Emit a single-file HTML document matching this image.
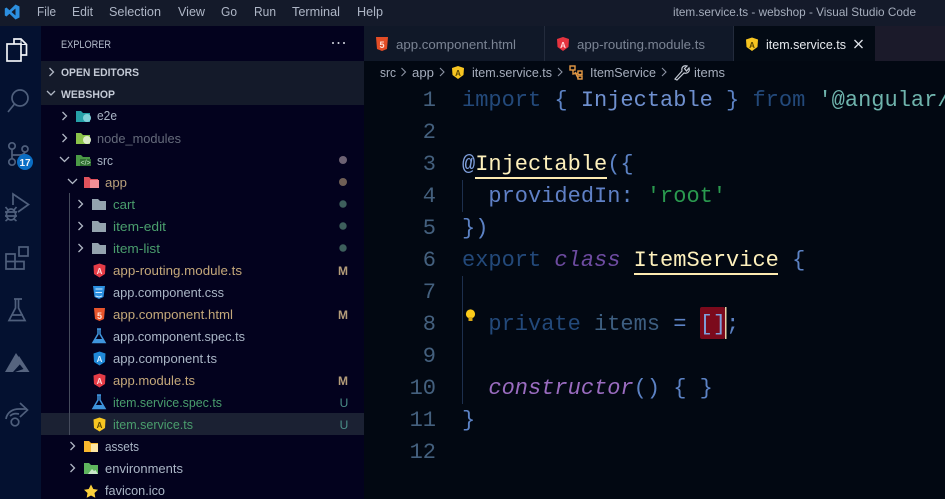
<!DOCTYPE html>
<html><head><meta charset="utf-8"><style>
html,body{margin:0;padding:0;background:#020812;width:945px;height:499px;overflow:hidden}
svg{display:block}
text{font-family:"Liberation Sans",sans-serif;font-size:13px;white-space:pre}
.m{fill:#aeb6c6;font-size:13px}
.t{font-size:13px}
.c text,text.c{font-family:"Liberation Mono",monospace;font-size:22px}
.ln{font-family:"Liberation Mono",monospace;font-size:22px;fill:#44607e;text-anchor:end}
.a{fill:none;stroke:#4f5f7c;stroke-width:1.7}
.ch{fill:none;stroke:#b0b7c4;stroke-width:1.3}
</style></head><body>
<svg width="945" height="499" viewBox="0 0 945 499" xmlns="http://www.w3.org/2000/svg">
<!-- backgrounds -->
<rect width="945" height="499" fill="#020812"/>
<rect width="945" height="26" fill="#141a2a"/>
<rect x="0" y="26" width="41" height="473" fill="#041130"/>
<rect x="41" y="26" width="323" height="473" fill="#03021e"/>
<rect x="41" y="61" width="323" height="44" fill="#141a2a"/>
<rect x="41" y="413" width="323" height="22" fill="#1b2133"/>
<rect x="364" y="26" width="581" height="35" fill="#101828"/>
<rect x="733" y="26" width="142" height="35" fill="#030a14"/>
<rect x="875" y="26" width="70" height="35" fill="#1b1a2a"/>
<rect x="544" y="26" width="1" height="35" fill="#232b3c"/>
<rect x="733" y="26" width="1" height="35" fill="#232b3c"/>

<!-- title bar -->
<path d="M15.5 4.500 19.500 6.500V17.500L15.500 19.500 9.500 13.800 6.500 16.500 4.800 15.500V8.500L6.500 7.500 9.500 10.200ZM15.500 8.500 11.500 12 15.500 15.500Z" fill="#2c8fe0"/>
<text class="m" x="37" y="16" textLength="19" lengthAdjust="spacingAndGlyphs">File</text>
<text class="m" x="72" y="16" textLength="21" lengthAdjust="spacingAndGlyphs">Edit</text>
<text class="m" x="109" y="16" textLength="52" lengthAdjust="spacingAndGlyphs">Selection</text>
<text class="m" x="178" y="16" textLength="27" lengthAdjust="spacingAndGlyphs">View</text>
<text class="m" x="221" y="16" textLength="16" lengthAdjust="spacingAndGlyphs">Go</text>
<text class="m" x="254" y="16" textLength="22" lengthAdjust="spacingAndGlyphs">Run</text>
<text class="m" x="292" y="16" textLength="48" lengthAdjust="spacingAndGlyphs">Terminal</text>
<text class="m" x="357" y="16" textLength="26" lengthAdjust="spacingAndGlyphs">Help</text>
<text x="673" y="16" style="font-size:12px" fill="#a6aebd" textLength="243" lengthAdjust="spacingAndGlyphs">item.service.ts - webshop - Visual Studio Code</text>

<!-- activity bar -->
<g fill="none" stroke="#f0f2f6" stroke-width="1.700">
<path d="M14 44V39H21L26.500 44.500V55H21"/>
<rect x="7" y="44" width="14" height="17"/>
<path d="M21 39V44.500H26.500" stroke-width="1"/>
</g>
<g class="a">
<circle cx="20" cy="98" r="8"/><path d="M14.500 104 8 112"/>
<circle cx="12" cy="146" r="3.200"/><circle cx="12" cy="162" r="3.200"/><circle cx="25" cy="149" r="3"/>
<path d="M12 149.500V158.500M12 155H20C23 155 25 153 25 152"/>
<path d="M13 205V194L28.500 204.500 18 212"/>
<path d="M5 212H17M8 210 5.500 207M14 210 16.500 207M8 219 5.500 221M14 219 16.500 221M5 216H17"/>
<ellipse cx="11" cy="214.500" rx="4.500" ry="5.500"/>
<path d="M6 254H15V269H6ZM6 261.500H24V269H15M15 254V261.500"/>
<rect x="19" y="247" width="9" height="9"/>
<path d="M14 299H22M15.500 299V308L9 320.500H25L18.500 308V299M11.500 315H23"/>
<path d="M6 419C7 412 13 409 19 409H27"/>
<path d="M20 403 27.500 410 20 417"/>
<path d="M10 416C12 414 15 413 19 414"/>
<circle cx="15" cy="422" r="3.800"/>
</g>
<path d="M16 353 5 372H13L22 362Z" fill="#56647f"/>
<path d="M19 356 29.500 372H15L23.500 369 17 361Z" fill="#56647f"/>
<circle cx="25" cy="162" r="8" fill="#0a6ec4"/>
<text x="25" y="166" text-anchor="middle" style="font-size:10px;font-weight:bold" fill="#f2f5fa">17</text>

<!-- explorer headers -->
<text x="61" y="48" style="font-size:11px" fill="#b4bccb" textLength="50" lengthAdjust="spacingAndGlyphs">EXPLORER</text>
<g fill="#d8dce4"><circle cx="333" cy="43" r="1"/><circle cx="338.500" cy="43" r="1"/><circle cx="344" cy="43" r="1"/></g>
<path class="ch" d="M49.500 68 53.500 72 49.500 76M47 91 51 95 55 91"/>
<text x="61" y="76" style="font-size:11px;font-weight:bold" fill="#c4cad6" textLength="78" lengthAdjust="spacingAndGlyphs">OPEN EDITORS</text>
<text x="61" y="98" style="font-size:11px;font-weight:bold" fill="#c4cad6" textLength="54" lengthAdjust="spacingAndGlyphs">WEBSHOP</text>

<!-- tree guide -->
<rect x="69" y="193" width="1" height="242" fill="#454b5c"/>
<!-- chevrons -->
<path class="ch" d="M62.500 112 66.500 116 62.500 120M62.500 134 66.500 138 62.500 142M60 157 64.500 161.500 69 157M68 179 72.500 183.500 77 179M78.500 200 82.500 204 78.500 208M78.500 222 82.500 226 78.500 230M78.500 244 82.500 248 78.500 252M70.500 442 74.500 446 70.500 450M70.500 464 74.500 468 70.500 472"/>

<!-- folder icons -->
<g>
<path d="M76 111H81L83 113H90V122H76Z" fill="#26a0a8"/><circle cx="87" cy="118" r="4" fill="#7fd0d8"/>
<path d="M76 133H81L83 135H90V144H76Z" fill="#8bc34a"/><circle cx="87" cy="140" r="4" fill="#dcedc8"/>
<path d="M76 155H81L83 157H90V166H76Z" fill="#4b9a46"/><rect x="80" y="159" width="11" height="7" fill="#2f6e31"/><text x="80.500" y="165" style="font-size:7px" fill="#c8e6c9">&lt;/&gt;</text>
<path d="M84 177H89L91 179H98V188H84Z" fill="#e0525c"/><rect x="90" y="180" width="9" height="8" fill="#f18f96"/>
<path d="M92 199H98L100 201H106V210H92Z" fill="#94a3ae"/>
<path d="M92 221H98L100 223H106V232H92Z" fill="#94a3ae"/>
<path d="M92 243H98L100 245H106V254H92Z" fill="#94a3ae"/>
<path d="M84 441H89L91 443H98V452H84Z" fill="#f9b82e"/><rect x="91" y="444" width="7" height="8" fill="#fde6a4"/>
<path d="M84 463H89L91 465H98V474H84Z" fill="#5fb65f"/><path d="M88 474 92 469 94 471 95.500 470 98 474Z" fill="#c9e7c9"/>
<path d="M91 484.500 93.300 489 98 489.700 94.500 493 95.300 497.800 91 495.500 86.700 497.800 87.500 493 84 489.700 88.700 489Z" fill="#fbd03c"/>
</g>

<!-- file icons -->
<g>
<path d="M99.500 263.500 105.500 265.500 105 274 99.500 277.500 94 274 93.500 265.500Z" fill="#e53b46"/><text x="99.500" y="274" text-anchor="middle" style="font-size:8px;font-weight:bold" fill="#ffd9dc">A</text>
<path d="M93 286H105L103.500 297 99 299 94.500 297Z" fill="#2b8fe0"/><path d="M95.500 289H102.500M95.500 292.500H102M95.500 296 99 297 102 296" stroke="#cfe8ff" fill="none" stroke-width="1"/>
<path d="M94 308H105L104 319 99.500 321 95 319Z" fill="#e8552c" /><text x="99.500" y="319" text-anchor="middle" style="font-size:9px;font-weight:bold" fill="#ffe0d6">5</text>
<path d="M98 329V334L93 342.500H105L100 334V329ZM97 329H101" fill="none" stroke="#3f95dd" stroke-width="1.500"/><path d="M95.500 339H102.500L104 342H94Z" fill="#3f95dd"/>
<path d="M99.500 351.500 105.500 353.500 105 362 99.500 365.500 94 362 93.500 353.500Z" fill="#1f88d8"/><text x="99.500" y="362" text-anchor="middle" style="font-size:8px;font-weight:bold" fill="#d8eeff">A</text>
<path d="M99.500 373.500 105.500 375.500 105 384 99.500 387.500 94 384 93.500 375.500Z" fill="#e53b46"/><text x="99.500" y="384" text-anchor="middle" style="font-size:8px;font-weight:bold" fill="#ffd9dc">A</text>
<path d="M98 395V400L93 408.500H105L100 400V395ZM97 395H101" fill="none" stroke="#3f95dd" stroke-width="1.500"/><path d="M95.500 405H102.500L104 408H94Z" fill="#3f95dd"/>
<path d="M99.500 417.500 105.500 419.500 105 428 99.500 431.500 94 428 93.500 419.500Z" fill="#f7c521"/><text x="99.500" y="428" text-anchor="middle" style="font-size:8px;font-weight:bold" fill="#5a4600">A</text>
</g>

<!-- tree text -->
<text class="t" x="97" y="120" fill="#aab6c6" textLength="20" lengthAdjust="spacingAndGlyphs">e2e</text>
<text class="t" x="97" y="143" fill="#656b7b" textLength="84" lengthAdjust="spacingAndGlyphs">node_modules</text>
<text class="t" x="97" y="165" fill="#aab6c6" textLength="16" lengthAdjust="spacingAndGlyphs">src</text>
<text class="t" x="105" y="187" fill="#b9a17c" textLength="22" lengthAdjust="spacingAndGlyphs">app</text>
<text class="t" x="113" y="209" fill="#4a9e6d" textLength="22" lengthAdjust="spacingAndGlyphs">cart</text>
<text class="t" x="113" y="231" fill="#4a9e6d" textLength="53" lengthAdjust="spacingAndGlyphs">item-edit</text>
<text class="t" x="113" y="253" fill="#4a9e6d" textLength="47" lengthAdjust="spacingAndGlyphs">item-list</text>
<text class="t" x="113" y="275" fill="#c4a87a" textLength="129" lengthAdjust="spacingAndGlyphs">app-routing.module.ts</text>
<text class="t" x="113" y="297" fill="#aab6c6" textLength="111" lengthAdjust="spacingAndGlyphs">app.component.css</text>
<text class="t" x="113" y="319" fill="#c4a87a" textLength="120" lengthAdjust="spacingAndGlyphs">app.component.html</text>
<text class="t" x="113" y="341" fill="#aab6c6" textLength="132" lengthAdjust="spacingAndGlyphs">app.component.spec.ts</text>
<text class="t" x="113" y="363" fill="#aab6c6" textLength="104" lengthAdjust="spacingAndGlyphs">app.component.ts</text>
<text class="t" x="113" y="385" fill="#c4a87a" textLength="82" lengthAdjust="spacingAndGlyphs">app.module.ts</text>
<text class="t" x="113" y="407" fill="#4a9e6d" textLength="109" lengthAdjust="spacingAndGlyphs">item.service.spec.ts</text>
<text class="t" x="113" y="429" fill="#4a9e6d" textLength="80" lengthAdjust="spacingAndGlyphs">item.service.ts</text>
<text class="t" x="105" y="451" fill="#aab6c6" textLength="34" lengthAdjust="spacingAndGlyphs">assets</text>
<text class="t" x="105" y="473" fill="#aab6c6" textLength="78" lengthAdjust="spacingAndGlyphs">environments</text>
<text class="t" x="105" y="495" fill="#aab6c6" textLength="60" lengthAdjust="spacingAndGlyphs">favicon.ico</text>

<!-- git status -->
<circle cx="343" cy="160" r="4" fill="#6d6273"/>
<circle cx="343" cy="182" r="4" fill="#6f5f55"/>
<circle cx="343" cy="204" r="3.700" fill="#3d5f5c"/>
<circle cx="343" cy="226" r="3.700" fill="#3d5f5c"/>
<circle cx="343" cy="248" r="3.700" fill="#3d5f5c"/>
<g fill="#b49d7a" text-anchor="middle">
<text x="343" y="275" style="font-size:12px;font-weight:bold">M</text>
<text x="343" y="319" style="font-size:12px;font-weight:bold">M</text>
<text x="343" y="385" style="font-size:12px;font-weight:bold">M</text>
</g>
<text x="344" y="407" text-anchor="middle" style="font-size:12px" fill="#4b8f88">U</text>
<text x="344" y="429" text-anchor="middle" style="font-size:12px" fill="#4b8f88">U</text>

<!-- tabs -->
<path d="M376 37H388L387 49 382 51 377 49Z" fill="#e44d26"/><text x="382" y="48" text-anchor="middle" style="font-size:9px;font-weight:bold" fill="#ffe0d6">5</text>
<text x="396" y="49" fill="#7b8494" textLength="120" lengthAdjust="spacingAndGlyphs">app.component.html</text>
<path d="M563 37 569 39 568.500 47 563 51 557.500 47 557 39Z" fill="#e5333f"/><text x="563" y="48" text-anchor="middle" style="font-size:8px;font-weight:bold" fill="#ffd9dc">A</text>
<text x="577" y="49" fill="#7b8494" textLength="128" lengthAdjust="spacingAndGlyphs">app-routing.module.ts</text>
<path d="M752 37.500 758 39.500 757.500 47 752 51 746.500 47 746 39.500Z" fill="#f7c521"/><text x="752" y="48" text-anchor="middle" style="font-size:8px;font-weight:bold" fill="#5a4600">A</text>
<text x="766" y="49" fill="#e8ebf0" textLength="80" lengthAdjust="spacingAndGlyphs">item.service.ts</text>
<path d="M854.500 40 862.500 48M862.500 40 854.500 48" stroke="#dfe3ea" stroke-width="1.300" fill="none"/>

<!-- breadcrumbs -->
<text x="380" y="77" fill="#a6aebd" textLength="16" lengthAdjust="spacingAndGlyphs">src</text>
<path d="M401.500 68 405.500 72 401.500 76M440 68 444 72 440 76M558 68 562 72 558 76M662 68 666 72 662 76" fill="none" stroke="#8b93a3" stroke-width="1.100"/>
<text x="412" y="77" fill="#a6aebd" textLength="22" lengthAdjust="spacingAndGlyphs">app</text>
<path d="M458 66 464 68 463.500 75 458 79 452.500 75 452 68Z" fill="#f7c521"/><text x="458" y="76" text-anchor="middle" style="font-size:8px;font-weight:bold" fill="#5a4600">A</text>
<text x="472" y="77" fill="#a6aebd" textLength="80" lengthAdjust="spacingAndGlyphs">item.service.ts</text>
<g fill="none" stroke="#e59a45" stroke-width="1.400"><rect x="570" y="66" width="5" height="4"/><rect x="578" y="71" width="4" height="3.500"/><rect x="578" y="76" width="4" height="3"/><path d="M573 70V74L578 73M575 72 578 78"/></g>
<text x="590" y="77" fill="#a6aebd" textLength="66" lengthAdjust="spacingAndGlyphs">ItemService</text>
<path d="M675 79 682 71C681 67 684 65 687 66L684.500 68.500 686.500 71 689 68C690 71 688 74 684 73L677 80Z" fill="none" stroke="#c3c8d2" stroke-width="1.200"/>
<text x="694" y="77" fill="#a6aebd" textLength="31" lengthAdjust="spacingAndGlyphs">items</text>

<!-- editor guides and highlights -->
<rect x="462" y="180" width="1" height="32" fill="#1d2f4d"/>
<rect x="462" y="276" width="1" height="128" fill="#1d2f4d"/>
<rect x="700" y="307" width="25" height="32" rx="2" fill="#7b0a1c"/>
<rect x="725" y="307" width="1.500" height="32" fill="#e8d3a8"/>
<rect x="475" y="177" width="132" height="2" fill="#fdeab0"/>
<rect x="634" y="273" width="144" height="2" fill="#fdeab0"/>

<!-- bulb -->
<circle cx="470.500" cy="314" r="4.600" fill="#fbcb1a"/><rect x="468.500" y="317" width="4" height="4" fill="#d9a815"/>

<!-- line numbers -->
<text class="ln" x="436" y="106">1</text>
<text class="ln" x="436" y="138">2</text>
<text class="ln" x="436" y="170">3</text>
<text class="ln" x="436" y="202">4</text>
<text class="ln" x="436" y="234">5</text>
<text class="ln" x="436" y="266">6</text>
<text class="ln" x="436" y="298">7</text>
<text class="ln" x="436" y="330">8</text>
<text class="ln" x="436" y="362">9</text>
<text class="ln" x="436" y="394">10</text>
<text class="ln" x="436" y="426">11</text>
<text class="ln" x="436" y="458">12</text>

<!-- code -->
<g class="c">
<text x="462" y="106" fill="#5c82c4"><tspan fill="#23497a">import</tspan> { <tspan fill="#6f90cf">Injectable</tspan> } <tspan fill="#23497a">from</tspan> <tspan fill="#6fb4ad">'@angular/</tspan></text>
<text x="462" y="170" fill="#5c82c4"><tspan fill="#7f9fdc">@</tspan><tspan fill="#fdf0bc">Injectable</tspan>({</text>
<text x="462" y="202" fill="#5c82c4">  <tspan fill="#5f80c6">providedIn</tspan>: <tspan fill="#2a9a4f">'root'</tspan></text>
<text x="462" y="234" fill="#5c82c4">})</text>
<text x="462" y="266" fill="#5c82c4"><tspan fill="#23497a">export</tspan> <tspan fill="#6d4ba0" font-style="italic">class</tspan> <tspan fill="#fdf0bc">ItemService</tspan> {</text>
<text x="462" y="330" fill="#5c82c4">  <tspan fill="#23497a">private</tspan> <tspan fill="#3d5e80">items</tspan> = <tspan fill="#7f9fdc">[]</tspan>;</text>
<text x="462" y="394" fill="#5c82c4">  <tspan fill="#9a6cc0" font-style="italic">constructor</tspan>() { }</text>
<text x="462" y="426" fill="#5c82c4">}</text>
</g>
</svg>
</body></html>
